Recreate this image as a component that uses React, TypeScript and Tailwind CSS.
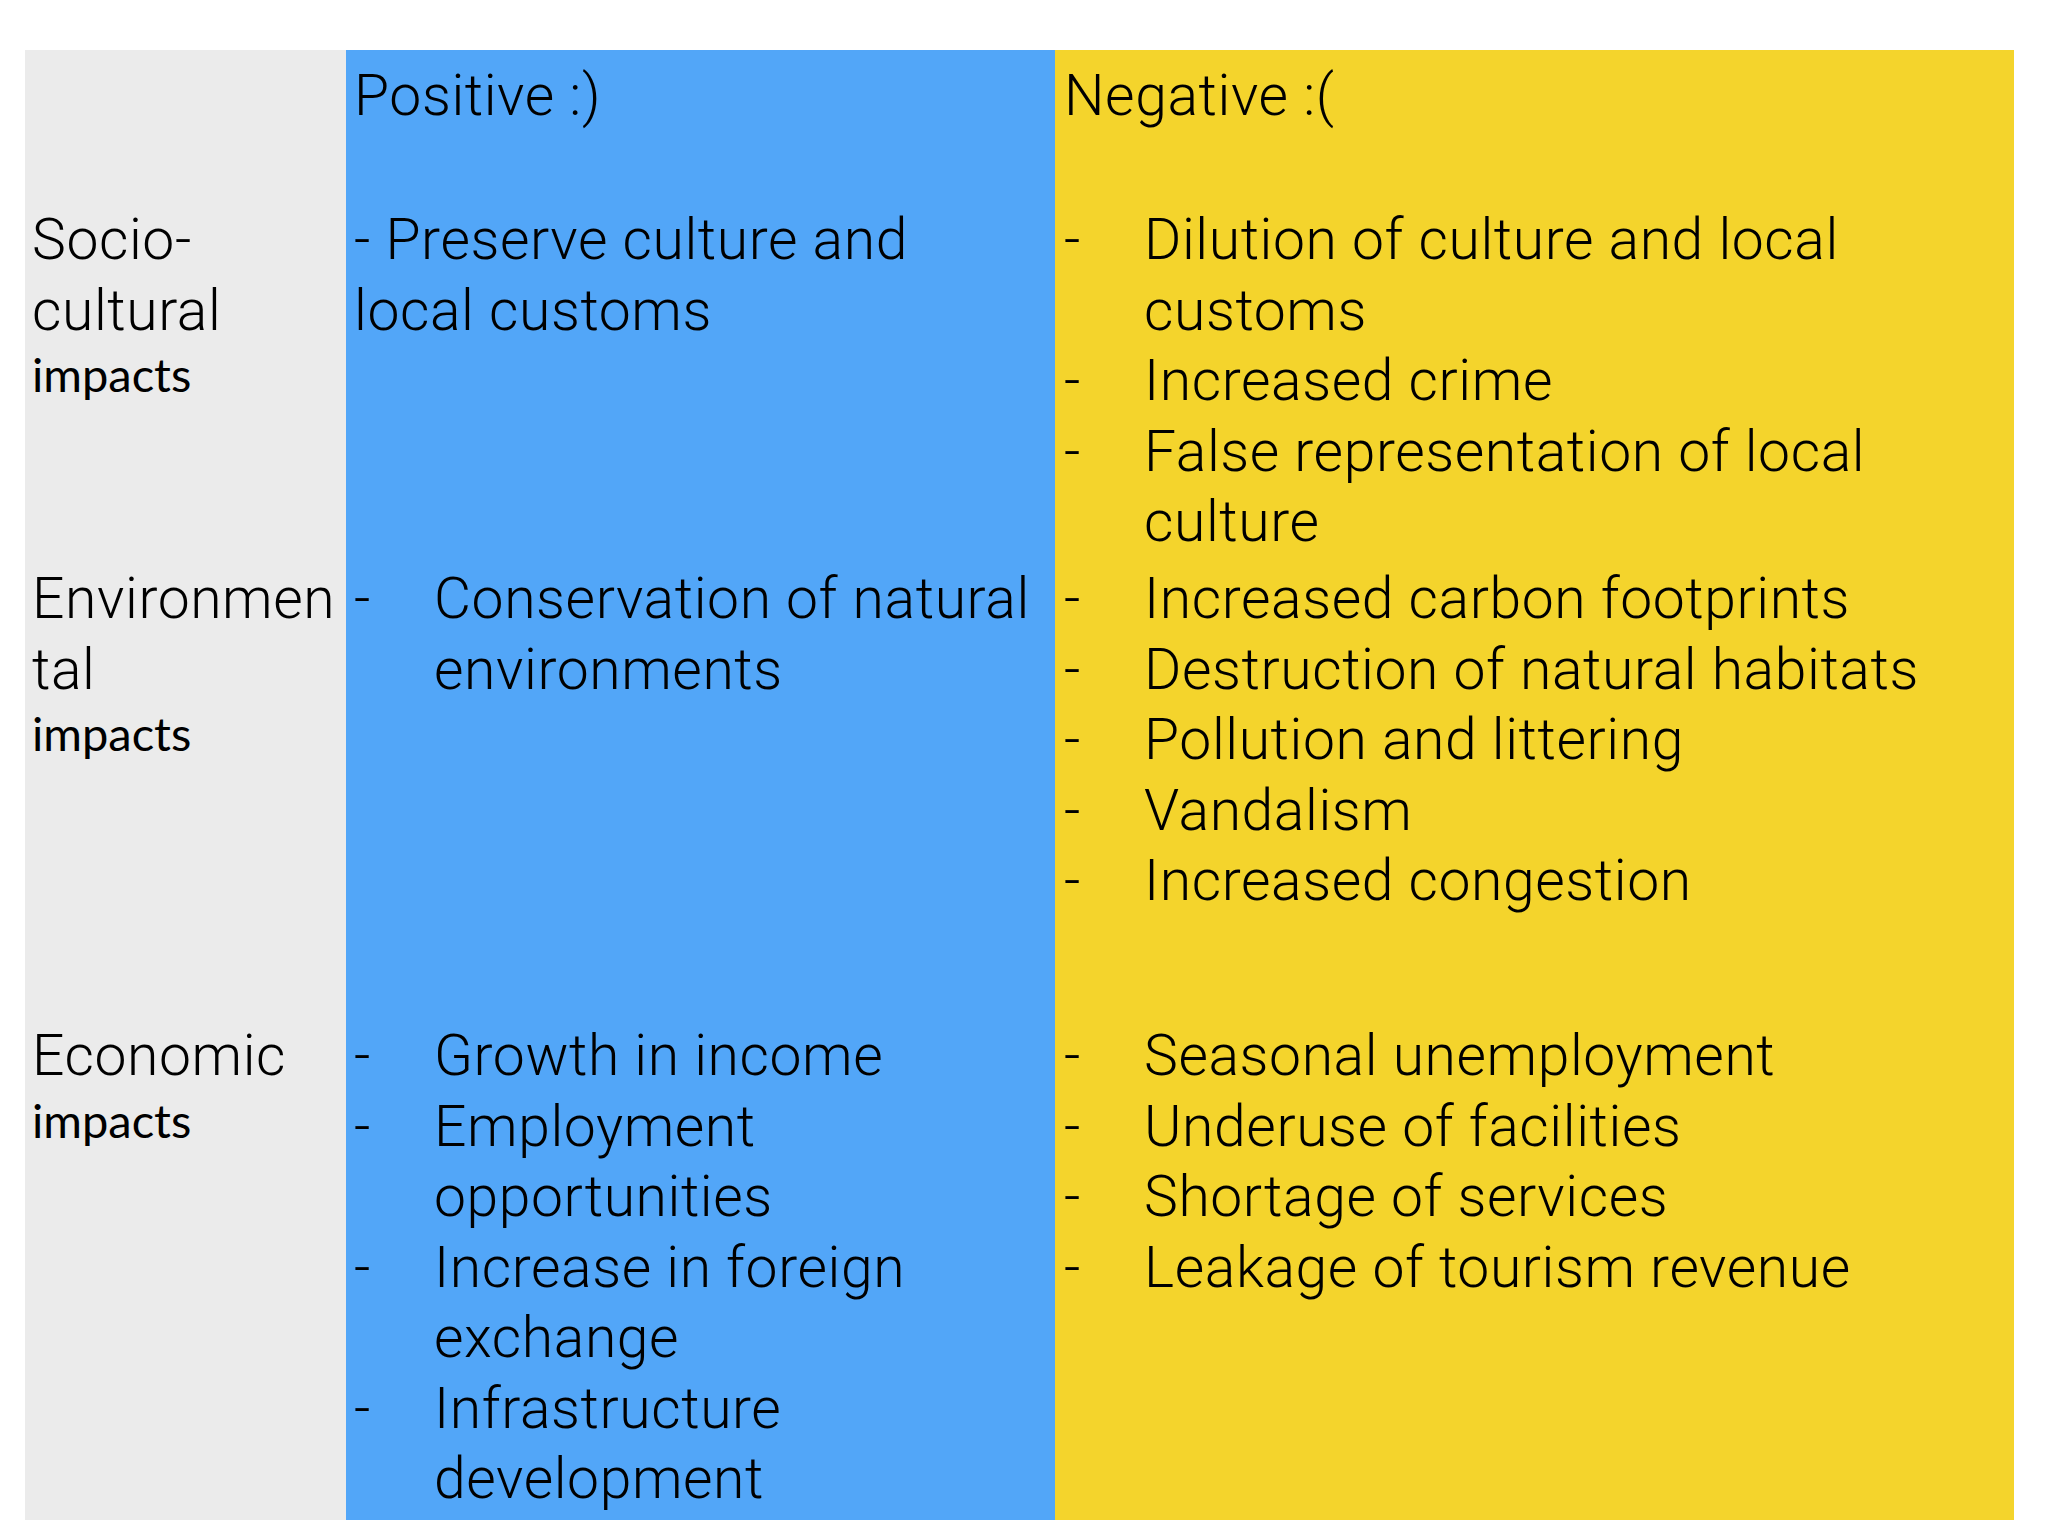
const body = "font-['Roboto','Liberation_Sans',sans-serif] font-light text-[57px] tracking-[0.6px] leading-[70.5px] text-black";

function Line({ children }: { children: React.ReactNode }) {
  return <div className="whitespace-nowrap">{children}</div>;
}

function Impacts() {
  return (
    <div className="font-['Lato','Open_Sans',sans-serif] font-normal text-[47px] tracking-normal leading-[56px] whitespace-nowrap">
      impacts
    </div>
  );
}

function Item({ lines }: { lines: string[] }) {
  return (
    <div className="flex">
      <div className="w-[80px] shrink-0">-</div>
      <div>
        {lines.map((l, i) => (
          <Line key={i}>{l}</Line>
        ))}
      </div>
    </div>
  );
}

function List({ items }: { items: string[][] }) {
  return (
    <div>
      {items.map((lines, i) => (
        <Item key={i} lines={lines} />
      ))}
    </div>
  );
}

export default function App() {
  const gray = "bg-[#ebebeb] pt-[10px] pl-[7px] overflow-hidden";
  const blue = "bg-[#52a6f8] pt-[10px] pl-[8px] overflow-hidden";
  const yellow = "bg-[#f4d42c] pt-[10px] pl-[9px] overflow-hidden";

  return (
    <div className="w-[2048px] h-[1536px] bg-white pt-[50px] pl-[25px]">
      <div className={`grid grid-cols-[321px_709px_959px] grid-rows-[145px_359px_457px_509px] ${body}`}>
        {/* header */}
        <div className={gray}></div>
        <div className={`${blue} pt-[11px]`}>
          <Line>Positive :)</Line>
        </div>
        <div className={`${yellow} pt-[11px]`}>
          <Line>Negative :(</Line>
        </div>

        {/* socio-cultural */}
        <div className={gray}>
          <Line>Socio-</Line>
          <Line>cultural</Line>
          <Impacts />
        </div>
        <div className={blue}>
          <Line>- Preserve culture and</Line>
          <Line>local customs</Line>
        </div>
        <div className={yellow}>
          <List
            items={[
              ["Dilution of culture and local", "customs"],
              ["Increased crime"],
              ["False representation of local", "culture"],
            ]}
          />
        </div>

        {/* environmental */}
        <div className={gray}>
          <Line>Environmen</Line>
          <Line>tal</Line>
          <Impacts />
        </div>
        <div className={blue}>
          <List items={[["Conservation of natural", "environments"]]} />
        </div>
        <div className={yellow}>
          <List
            items={[
              ["Increased carbon footprints"],
              ["Destruction of natural habitats"],
              ["Pollution and littering"],
              ["Vandalism"],
              ["Increased congestion"],
            ]}
          />
        </div>

        {/* economic */}
        <div className={gray}>
          <Line>Economic</Line>
          <Impacts />
        </div>
        <div className={blue}>
          <List
            items={[
              ["Growth in income"],
              ["Employment", "opportunities"],
              ["Increase in foreign", "exchange"],
              ["Infrastructure", "development"],
            ]}
          />
        </div>
        <div className={yellow}>
          <List
            items={[
              ["Seasonal unemployment"],
              ["Underuse of facilities"],
              ["Shortage of services"],
              ["Leakage of tourism revenue"],
            ]}
          />
        </div>
      </div>
    </div>
  );
}
